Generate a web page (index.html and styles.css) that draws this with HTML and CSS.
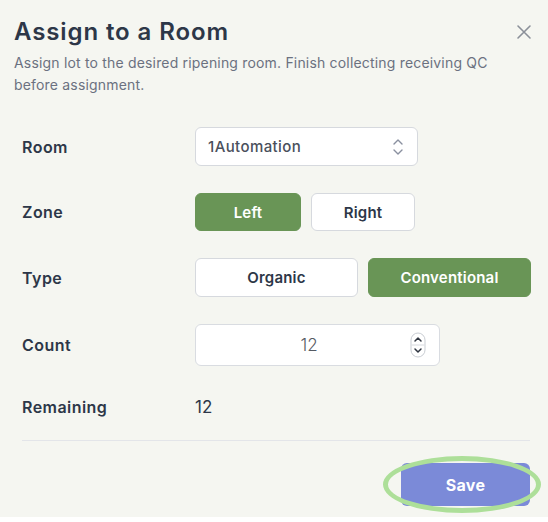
FILE: index.html
```html
<!DOCTYPE html>
<html lang="en">
<head>
<meta charset="utf-8">
<title>Assign to a Room</title>
<link rel="stylesheet" href="styles.css">
</head>
<body>
<div class="dialog">
  <div class="header">
    <h1 class="title">Assign to a Room</h1>
    <button class="close" aria-label="Close">
      <svg width="16" height="16" viewBox="0 0 16 16"><path d="M2 2 L14 14 M14 2 L2 14" stroke="#8b9099" stroke-width="1.6" fill="none" stroke-linecap="round"/></svg>
    </button>
  </div>
  <p class="subtitle">Assign lot to the desired ripening room. Finish collecting receiving QC before assignment.</p>

  <div class="form">
    <div class="label">Room</div>
    <div class="control">
      <div class="select">
        <span class="select-text">1Automation</span>
        <svg class="chev" width="12" height="18" viewBox="0 0 12 18"><path d="M2 6 L6 2 L10 6 M2 12 L6 16 L10 12" stroke="#8a90a0" stroke-width="1.4" fill="none" stroke-linecap="round" stroke-linejoin="round"/></svg>
      </div>
    </div>

    <div class="label">Zone</div>
    <div class="control seg">
      <button class="btn btn-on w-left">Left</button>
      <button class="btn w-right">Right</button>
    </div>

    <div class="label">Type</div>
    <div class="control seg">
      <button class="btn w-type">Organic</button>
      <button class="btn btn-on w-type">Conventional</button>
    </div>

    <div class="label">Count</div>
    <div class="control">
      <div class="number">
        <span class="number-text">12</span>
        <svg class="spin" width="16" height="26" viewBox="0 0 16 26"><rect x="1" y="1" width="14" height="24" rx="7" fill="#fff" stroke="#c9cdd3"/><line x1="1.5" y1="13" x2="14.5" y2="13" stroke="#d6d9de"/><path d="M5 9 L8 6 L11 9" stroke="#2f3540" stroke-width="1.5" fill="none" stroke-linecap="round" stroke-linejoin="round"/><path d="M5 17 L8 20 L11 17" stroke="#2f3540" stroke-width="1.5" fill="none" stroke-linecap="round" stroke-linejoin="round"/></svg>
      </div>
    </div>

    <div class="label row-last">Remaining</div>
    <div class="control row-last value">12</div>
  </div>

  <div class="divider"></div>

  <div class="footer">
    <div class="save-wrap">
      <button class="save">Save</button>
      <span class="ring"></span>
    </div>
  </div>
</div>
</body>
</html>
```

FILE: styles.css
```css
* { box-sizing: border-box; }
html, body { margin: 0; padding: 0; background: #ffffff; }
body {
  font-family: Inter, "Noto Sans", "Liberation Sans", sans-serif;
  color: #2d3748;
  width: 548px;
  height: 522px;
  overflow: hidden;
}
.dialog {
  background: #f5f6f1;
  height: 517px;
  padding: 17px 0 0 0;
}
.header {
  display: flex;
  justify-content: space-between;
  align-items: center;
  padding: 0 16px 0 14px;
}
.title {
  margin: 0;
  font-size: 24px;
  line-height: 30px;
  font-weight: 600;
  color: #2d3748;
  letter-spacing: 0.9px;
}
.close {
  border: 0;
  background: none;
  padding: 0;
  width: 16px;
  height: 16px;
  display: flex;
  margin-top: -1px;
}
.subtitle {
  margin: 5px 0 0 0;
  padding: 0 14px;
  font-size: 14px;
  line-height: 22px;
  color: #6b7180;
  width: 520px;
  letter-spacing: 0.18px;
}
.form {
  display: grid;
  grid-template-columns: 173px 1fr;
  row-gap: 27px;
  align-items: center;
  margin-top: 31px;
  padding: 0 18px 0 22px;
}
.label {
  font-size: 16px;
  font-weight: 600;
  color: #2d3748;
  letter-spacing: 0.45px;
}
.control { display: flex; }
.seg { gap: 10px; }
.select {
  width: 223px;
  height: 39px;
  background: #fff;
  border: 1px solid #d6d9de;
  border-radius: 6px;
  display: flex;
  align-items: center;
  justify-content: space-between;
  padding: 0 13px 0 12px;
}
.select-text {
  font-size: 15px;
  font-weight: 500;
  color: #4a505c;
  letter-spacing: 0.4px;
}
.btn {
  height: 38px;
  border: 1px solid #d6d9de;
  border-radius: 6px;
  background: #fff;
  font-family: inherit;
  font-size: 15px;
  font-weight: 600;
  color: #2d3748;
  padding: 0;
  letter-spacing: 0.2px;
}
.btn-on {
  background: #699556;
  border-color: #699556;
  color: #fff;
}
.w-left { width: 106px; }
.w-right { width: 104px; }
.w-type { width: 163px; height: 39px; }
.number {
  width: 245px;
  height: 42px;
  background: #fff;
  border: 1px solid #d9dce1;
  border-radius: 6px;
  display: flex;
  align-items: center;
  position: relative;
}
.number-text {
  flex: 1;
  text-align: center;
  font-size: 17px;
  font-weight: 300;
  color: #555a63;
  padding-left: 12px;
}
.spin { margin-right: 13px; }
.row-last { height: 28px; line-height: 28px; }
.value {
  font-size: 17px;
  color: #2d3748;
  letter-spacing: 0;
}
.divider {
  margin: 19px 18px 0 22px;
  height: 1px;
  background: #e3e5e9;
}
.footer {
  display: flex;
  justify-content: flex-end;
  padding: 22px 18px 0 0;
}
.save-wrap { position: relative; display: flex; }
.save {
  width: 129px;
  height: 43px;
  border: 0;
  border-radius: 6px;
  background: #7b8ad8;
  color: #fff;
  font-family: inherit;
  font-size: 16px;
  font-weight: 700;
  padding: 0;
  letter-spacing: 0.3px;
}
.ring {
  position: absolute;
  left: -18px;
  top: -7px;
  width: 158px;
  height: 57px;
  border: 5px solid #addf99;
  border-radius: 50%;
  pointer-events: none;
}
```
